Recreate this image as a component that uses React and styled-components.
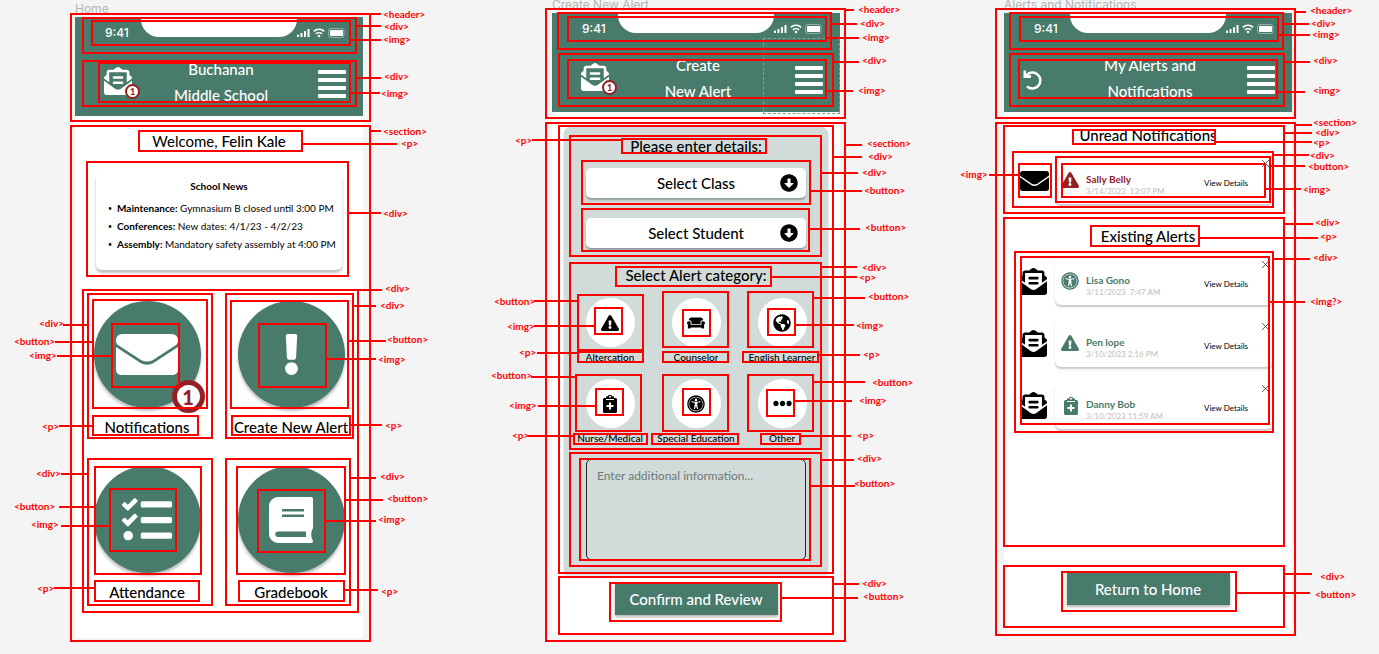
import React from "react";
import styled, { createGlobalStyle, css } from "styled-components";
import {
  FaArrowAltCircleDown,
  FaCouch,
  FaEllipsisH,
  FaEnvelopeOpenText,
  FaExclamation,
  FaExclamationTriangle,
  FaGlobeAmericas,
  FaTasks,
  FaUniversalAccess,
} from "react-icons/fa";

const color = {
  canvas: "#f4f4f4",
  green: "#497b6c",
  sage: "#d1dcda",
  maroon: "#942024",
  mark: "#ff0000",
  frameName: "#b5b5b5",
};

const GlobalStyle = createGlobalStyle`
  * { box-sizing: border-box; }
  body {
    margin: 0;
    background: ${color.canvas};
    font-family: Lato, "Open Sans", sans-serif;
    color: #000;
  }
  button, select, textarea { font-family: inherit; }
  button { cursor: pointer; }
`;

/* ---------- canvas and frames ---------- */

const Canvas = styled.main`
  display: grid;
  grid-template-columns: 477fr 452fr 436fr;
  align-items: start;
  min-height: 100vh;
  padding-left: 14px;
  overflow: hidden;
`;

const Board = styled.div`
  position: relative;
  padding: ${(p) => p.$top}px 0 0 61px;
`;

const FrameName = styled.div`
  height: 16px;
  margin-top: -16px;
  font: 400 12px/16px Inter, sans-serif;
  color: ${color.frameName};
`;

const Phone = styled.article`
  width: 288px;
  background: #fff;
`;

/* ---------- header ---------- */

const Header = styled.header`
  height: 99px;
  background: ${color.green};
  color: #fff;
`;

const StatusBar = styled.div`
  display: grid;
  grid-template-columns: 66px 156px 66px;
  height: 47px;
`;

const Clock = styled.span`
  padding-left: 30px;
  font: 500 12px/32px Inter, sans-serif;
`;

const Notch = styled.span`
  height: 20px;
  background: #fff;
  border-radius: 0 0 18px 18px;
`;

const StatusIcons = styled.svg`
  width: 48px;
  height: 10px;
  margin-top: 11px;
`;

const TitleBar = styled.div`
  display: grid;
  grid-template-columns: 60px 1fr 56px;
  height: 44px;
`;

const Title = styled.h1`
  display: flex;
  flex-direction: column;
  justify-content: flex-end;
  align-items: center;
  height: 44px;
  margin: 0;
  overflow: hidden;
  font-size: 15px;
  line-height: 26px;
  font-weight: 500;
  text-align: center;
`;

const HeaderButton = styled.button`
  position: relative;
  display: flex;
  align-items: flex-start;
  padding: ${(p) => p.$pad};
  border: 0;
  background: none;
  color: #fff;
`;

const Badge = styled.span`
  position: absolute;
  display: flex;
  align-items: center;
  justify-content: center;
  border-radius: 50%;
  border-style: solid;
  border-color: ${color.maroon};
  background: #fff;
  color: ${color.maroon};
  font-weight: 900;
  ${(p) =>
    p.$large
      ? css`right: -4px; bottom: -5px; width: 33px; height: 33px; border-width: 5px; font-size: 20px;`
      : css`left: 50px; top: 20px; width: 15px; height: 15px; border-width: 2px; font-size: 9px;`}
`;

const MenuBars = styled.span`
  display: grid;
  gap: 4px;
  i { width: 28px; height: 4px; border-radius: 1px; background: #fff; }
`;

/* ---------- shared text and buttons ---------- */

const Section = styled.section`
  display: flex;
  flex-direction: column;
  align-items: center;
  padding: ${(p) => p.$pad};
`;

const Lead = styled.p`
  margin: ${(p) => p.$top || 0}px 0 0;
  font-size: 15px;
  line-height: 20px;
  font-weight: ${(p) => (p.$light ? 400 : 500)};
  text-align: center;
  white-space: nowrap;
  strong { font-weight: 500; }
`;

const ActionButton = styled.button`
  width: 163px;
  height: 32px;
  margin-top: ${(p) => p.$top}px;
  padding: 0;
  border: 0;
  background: ${color.green};
  box-shadow: 0 2px 3px rgba(0, 0, 0, 0.3);
  color: #fff;
  font-size: 15px;
  font-weight: 500;
`;

/* ---------- home ---------- */

const NewsCard = styled.div`
  width: 246px;
  height: 98px;
  margin-top: 21px;
  padding-top: 6px;
  border-radius: 6px;
  box-shadow: 0 3px 3px rgba(0, 0, 0, 0.25);
  font-size: 10px;
  h2 { margin: 0; font-size: 10px; line-height: 16px; text-align: center; }
  ul { margin: 5px 0 0; padding: 0 0 0 21px; list-style: none; }
  li { position: relative; line-height: 18px; white-space: nowrap; }
  li::before { content: "•"; position: absolute; left: -9px; font-size: 7px; }
`;

const Tiles = styled.div`
  display: grid;
  grid-template-columns: 1fr 1fr;
  gap: 29px 0;
  width: 100%;
  margin-top: 31px;
`;

const Tile = styled.div`
  display: flex;
  flex-direction: column;
  align-items: center;
`;

const TileButton = styled.button`
  position: relative;
  display: flex;
  align-items: center;
  justify-content: center;
  width: 107px;
  height: 107px;
  padding: 0;
  border: 0;
  border-radius: 50%;
  background: ${color.green};
  box-shadow: 0 3px 3px rgba(0, 0, 0, 0.25);
  color: #fff;
`;

/* ---------- create alert ---------- */

const Panel = styled.form`
  display: flex;
  flex-direction: column;
  align-items: center;
  width: 264px;
  padding: 9px 0 13px;
  border-radius: 6px 6px 0 0;
  background: ${color.sage};
  box-shadow: 0 2px 3px rgba(0, 0, 0, 0.2);
`;

const Picker = styled.label`
  position: relative;
  display: block;
  width: 220px;
  margin-top: ${(p) => p.$top}px;
  svg { position: absolute; right: 8px; top: 6px; pointer-events: none; }
`;

const Select = styled.select`
  display: block;
  width: 100%;
  height: 30px;
  border: 0;
  border-radius: 5px;
  background: #fff;
  box-shadow: 0 2px 2px rgba(0, 0, 0, 0.3);
  appearance: none;
  color: #000;
  font-size: 15px;
  font-weight: 500;
  text-align-last: center;
`;

const Categories = styled.div`
  display: grid;
  grid-template-columns: repeat(3, 86px);
  gap: 16px 0;
  margin-top: 13px;
`;

const Category = styled.div`
  display: flex;
  flex-direction: column;
  align-items: center;
  gap: 4px;
  p { height: 12px; margin: 0; overflow: hidden; font-size: 10px; line-height: 12px; font-weight: 500; white-space: nowrap; }
`;

const RoundButton = styled.button`
  display: flex;
  align-items: center;
  justify-content: center;
  width: 49px;
  height: 49px;
  padding: 0;
  border: 0;
  border-radius: 50%;
  background: #fff;
  color: #000;
`;

const Notes = styled.textarea`
  display: block;
  width: 220px;
  height: 101px;
  margin-top: 15px;
  padding: 8px 10px;
  border: 1px solid #222;
  border-radius: 5px;
  background: transparent;
  font-size: 12px;
  line-height: 16px;
  resize: none;
  &::placeholder { color: #6f7977; opacity: 1; }
`;

/* ---------- alerts ---------- */

const AlertList = styled.ul`
  display: grid;
  gap: 15px;
  width: 100%;
  margin: ${(p) => p.$top}px 0 0;
  padding: 0 19px 0 16px;
  list-style: none;
`;

const AlertRow = styled.li`
  display: grid;
  grid-template-columns: 35px 1fr;
  align-items: center;
`;

const AlertCard = styled.div`
  position: relative;
  display: grid;
  grid-template-columns: 25px 1fr 69px;
  height: 47px;
  padding-left: 6px;
  border-radius: 6px;
  box-shadow: 0 2px 2px rgba(0, 0, 0, 0.22);
  color: ${(p) => (p.$unread ? color.maroon : color.green)};
  > svg { margin-top: 14px; }
`;

const Person = styled.div`
  display: flex;
  flex-direction: column;
  padding-top: 16px;
  white-space: pre;
  strong { font-size: 10px; line-height: 13px; font-weight: 700; }
  time { font-size: 8px; line-height: 11px; color: #bdbdbd; }
`;

const DetailsLink = styled.a`
  padding-top: 20px;
  font-size: 8px;
  line-height: 12px;
  color: #000;
  text-decoration: none;
`;

const Dismiss = styled.button`
  position: absolute;
  top: 2px;
  right: 3px;
  display: flex;
  padding: 0;
  border: 0;
  background: none;
`;

/* ---------- mark-up callouts lying over the frames ---------- */

const Layer = styled.div`
  position: absolute;
  inset: 0;
  pointer-events: none;
`;

const Outline = styled.div`
  position: absolute;
  left: ${(p) => p.$r[0]}px;
  top: ${(p) => p.$r[1]}px;
  width: ${(p) => p.$r[2]}px;
  height: ${(p) => p.$r[3]}px;
  border: ${(p) => (p.$ghost ? "1px dashed #8e9a96" : `2px solid ${color.mark}`)};
`;

const Leader = styled.div`
  position: absolute;
  left: ${(p) => p.$from}px;
  top: ${(p) => p.$y - 1}px;
  width: ${(p) => p.$to - p.$from}px;
  height: 2px;
  background: ${color.mark};
`;

const Tag = styled.span`
  position: absolute;
  left: ${(p) => p.$x}px;
  top: ${(p) => p.$y - 5}px;
  font-size: 10px;
  line-height: 10px;
  font-weight: 700;
  white-space: nowrap;
  color: ${color.mark};
`;

/* box: [x, y, w, h]; line: [from, to, y]; tag: [name, x, y] */
const homeMarks = [
  { box: [56, 13, 301, 109], line: [357, 367, 14], tag: ["header", 369, 14] },
  { box: [68, 17, 275, 37], line: [343, 367, 26], tag: ["div", 370, 26] },
  { box: [77, 20, 260, 26], line: [337, 367, 40], tag: ["img", 369, 39] },
  { box: [68, 60, 275, 47], line: [343, 367, 78], tag: ["div", 370, 76] },
  { box: [84, 62, 253, 41], line: [337, 366, 93], tag: ["img", 367, 93] },
  { box: [56, 125, 301, 517], line: [357, 367, 131], tag: ["section", 369, 131] },
  { box: [124, 130, 165, 22], line: [289, 383, 144], tag: ["p", 387, 143] },
  { box: [72, 161, 263, 116], line: [335, 367, 213], tag: ["div", 369, 213] },
  { box: [68, 289, 277, 324], line: [345, 368, 290], tag: ["div", 371, 288] },
  { box: [73, 293, 126, 146], line: [49, 73, 325], tag: ["div", 25, 323] },
  { box: [78, 299, 116, 110], line: [41, 78, 342], tag: ["button", 0, 341] },
  { box: [97, 323, 69, 65], line: [43, 97, 356], tag: ["img", 15, 355] },
  { box: [78, 415, 107, 21], line: [45, 78, 426], tag: ["p", 28, 426] },
  { box: [211, 293, 129, 146], line: [340, 362, 306], tag: ["div", 366, 305] },
  { box: [216, 300, 119, 109], line: [335, 372, 341], tag: ["button", 373, 339] },
  { box: [244, 323, 69, 65], line: [313, 362, 359], tag: ["img", 364, 359] },
  { box: [217, 415, 120, 21], line: [337, 368, 425], tag: ["p", 371, 425] },
  { box: [73, 458, 126, 148], line: [47, 73, 474], tag: ["div", 22, 473] },
  { box: [80, 466, 108, 109], line: [45, 80, 507], tag: ["button", 0, 506] },
  { box: [95, 488, 68, 64], line: [47, 95, 526], tag: ["img", 17, 524] },
  { box: [80, 580, 106, 22], line: [40, 80, 588], tag: ["p", 23, 588] },
  { box: [211, 458, 126, 148], line: [337, 362, 478], tag: ["div", 366, 476] },
  { box: [222, 466, 110, 109], line: [332, 369, 500], tag: ["button", 373, 498] },
  { box: [243, 489, 69, 64], line: [312, 362, 521], tag: ["img", 364, 519] },
  { box: [224, 580, 107, 22], line: [331, 364, 590], tag: ["p", 367, 591] },
];

const createMarks = [
  { box: [272, 38, 77, 76], ghost: true },
  { box: [54, 8, 301, 111], line: [355, 363, 10], tag: ["header", 367, 9] },
  { box: [66, 12, 275, 38], line: [341, 366, 24], tag: ["div", 369, 23] },
  { box: [76, 16, 260, 26], line: [336, 368, 38], tag: ["img", 371, 37] },
  { box: [67, 53, 276, 54], line: [343, 368, 62], tag: ["div", 371, 60] },
  { box: [76, 59, 260, 40], line: [336, 362, 91], tag: ["img", 367, 90] },
  { box: [54, 122, 301, 520], line: [355, 371, 145], tag: ["section", 376, 143] },
  { box: [67, 125, 276, 449], line: [343, 371, 157], tag: ["div", 377, 156] },
  { box: [78, 135, 253, 122], line: [331, 367, 173], tag: ["div", 371, 172] },
  { box: [130, 138, 146, 16], line: [41, 130, 140], tag: ["p", 24, 140] },
  { box: [90, 160, 230, 45], line: [320, 371, 191], tag: ["button", 373, 190] },
  { box: [90, 208, 229, 44], line: [319, 369, 229], tag: ["button", 374, 227] },
  { box: [78, 262, 253, 188], line: [331, 366, 267], tag: ["div", 371, 267] },
  { box: [124, 266, 157, 21], line: [281, 366, 277], tag: ["p", 368, 277] },
  { box: [86, 294, 67, 57], line: [43, 86, 301], tag: ["button", 3, 301] },
  { box: [103, 307, 29, 28], line: [43, 103, 326], tag: ["img", 16, 326] },
  { box: [86, 351, 67, 12], line: [46, 86, 353], tag: ["p", 28, 352] },
  { box: [171, 291, 67, 57] },
  { box: [191, 309, 29, 28] },
  { box: [171, 351, 67, 12] },
  { box: [256, 291, 67, 57], line: [323, 374, 298], tag: ["button", 377, 296] },
  { box: [276, 308, 29, 28], line: [305, 363, 325], tag: ["img", 365, 325] },
  { box: [251, 351, 77, 12], line: [328, 369, 355], tag: ["p", 372, 354] },
  { box: [84, 374, 67, 58], line: [40, 84, 377], tag: ["button", 0, 375] },
  { box: [104, 388, 29, 28], line: [47, 104, 406], tag: ["img", 18, 405] },
  { box: [82, 433, 75, 12], line: [37, 82, 436], tag: ["p", 21, 435] },
  { box: [171, 374, 67, 58] },
  { box: [191, 388, 29, 28] },
  { box: [160, 433, 88, 12] },
  { box: [256, 374, 67, 58], line: [323, 374, 382], tag: ["button", 381, 382] },
  { box: [275, 389, 29, 28], line: [304, 361, 401], tag: ["img", 368, 400] },
  { box: [269, 433, 41, 12], line: [310, 360, 436], tag: ["p", 366, 435] },
  { box: [78, 452, 253, 115], line: [331, 363, 460], tag: ["div", 366, 458] },
  { box: [88, 458, 232, 103], line: [320, 364, 486], tag: ["button", 363, 483] },
  { box: [67, 576, 276, 59], line: [343, 368, 584], tag: ["div", 371, 583] },
  { box: [118, 582, 173, 40], line: [291, 367, 598], tag: ["button", 372, 596] },
];

const alertMarks = [
  { box: [52, 8, 301, 111], line: [353, 363, 12], tag: ["header", 367, 10] },
  { box: [66, 12, 275, 38], line: [341, 366, 24], tag: ["div", 368, 23] },
  { box: [76, 16, 260, 26], line: [336, 367, 35], tag: ["img", 369, 34] },
  { box: [66, 53, 276, 54], line: [342, 367, 62], tag: ["div", 370, 60] },
  { box: [75, 59, 260, 40], line: [335, 362, 92], tag: ["img", 370, 90] },
  { box: [52, 122, 301, 514], line: [353, 369, 125], tag: ["section", 370, 122] },
  { box: [60, 125, 282, 89], line: [342, 369, 133], tag: ["div", 372, 132] },
  { box: [129, 129, 144, 16], line: [273, 369, 142], tag: ["p", 370, 142] },
  { box: [69, 151, 262, 57], line: [331, 366, 155], tag: ["div", 367, 155] },
  { box: [75, 163, 34, 35], line: [46, 75, 175], tag: ["img", 17, 174] },
  { box: [112, 156, 216, 47], line: [328, 362, 166], tag: ["button", 365, 166] },
  { box: [118, 163, 205, 35], line: [323, 358, 189], tag: ["img", 360, 189] },
  { box: [60, 217, 282, 330], line: [342, 370, 224], tag: ["div", 372, 222] },
  { box: [147, 225, 110, 22], line: [257, 375, 238], tag: ["p", 377, 236] },
  { box: [71, 251, 260, 182], line: [331, 367, 259], tag: ["div", 370, 257] },
  { box: [77, 256, 250, 169], line: [327, 362, 302], tag: ["img?", 367, 301] },
  { box: [60, 565, 282, 63], line: [342, 369, 574], tag: ["div", 377, 576] },
  { box: [118, 571, 176, 41], line: [294, 367, 593], tag: ["button", 372, 594] },
];

function Callouts({ marks }) {
  return (
    <Layer>
      {marks.map((m, i) => (
        <React.Fragment key={i}>
          <Outline $r={m.box} $ghost={m.ghost} />
          {m.line && <Leader $from={m.line[0]} $to={m.line[1]} $y={m.line[2]} />}
          {m.tag && (
            <Tag $x={m.tag[1]} $y={m.tag[2]}>{`<${m.tag[0]}>`}</Tag>
          )}
        </React.Fragment>
      ))}
    </Layer>
  );
}

/* ---------- drawings ---------- */

const Envelope = ({ width, height }) => (
  <svg width={width} height={height} viewBox="0 0 62 41" preserveAspectRatio="none" fill="currentColor" aria-hidden="true">
    <path d="M6 0h50a6 6 0 0 1 6 6v1c0 2-1 3-2 4L37 26c-4 2-8 2-12 0L2 11C1 10 0 9 0 7V6a6 6 0 0 1 6-6z" />
    <path d="M0 13l23 15c5 3.500 11 3.500 16 0l23-15v23a5 5 0 0 1-5 5H5a5 5 0 0 1-5-5z" />
  </svg>
);

const Book = () => (
  <svg width="44" height="46" viewBox="0 0 44 46" aria-hidden="true">
    <path
      fill="currentColor"
      fillRule="evenodd"
      d="M9 0h33a2 2 0 0 1 2 2v29a3 3 0 0 1-1 2c-1 3-1 6 0 9a3 3 0 0 1 1 2 2 2 0 0 1-2 2H9a9 9 0 0 1-9-9V9a9 9 0 0 1 9-9zM13 12v2.500h22V12zM13 17.500V20h22v-2.500zM9 34.500a2.700 2.700 0 0 0 0 5.500h28v-5.500z"
    />
  </svg>
);

const Clipboard = ({ size }) => (
  <svg width={size} height={size} viewBox="0 0 20 20" aria-hidden="true">
    <path
      fill="currentColor"
      fillRule="evenodd"
      d="M6 2.500h1.500a2.700 2.700 0 0 1 5 0H14V4h1.500A1.500 1.500 0 0 1 17 5.500v12a1.500 1.500 0 0 1-1.500 1.500h-11A1.500 1.500 0 0 1 3 17.500v-12A1.500 1.500 0 0 1 4.500 4H6zM10 1.800a1 1 0 1 0 0 2 1 1 0 0 0 0-2zM6 5v1h8V5zM9 8.500V11H6.500v2H9v2.500h2V13h2.500v-2H11V8.500z"
    />
  </svg>
);

const Undo = () => (
  <svg width="20" height="20" viewBox="0 0 20 20" fill="none" aria-hidden="true">
    <path d="M4 5.500a8 8 0 1 1 0.500 11.500" stroke="currentColor" strokeWidth="2.500" transform="translate(-0.500 -0.500)" />
    <path d="M0.500 0.500h2.500v3.500l5 1v3H0.500z" fill="currentColor" />
  </svg>
);

const Status = () => (
  <StatusIcons viewBox="0 0 48 10" aria-hidden="true">
    <g fill="#fff">
      <rect x="0" y="6.500" width="2" height="2.500" rx=".6" />
      <rect x="3.500" y="5" width="2" height="4" rx=".6" />
      <rect x="7" y="3" width="2" height="6" rx=".6" />
      <rect x="10.500" y="1" width="2" height="8" rx=".6" />
      <rect x="33" y="2" width="13" height="6" rx="1" />
      <circle cx="22" cy="8" r="1.300" />
    </g>
    <g fill="none" stroke="#fff" strokeWidth="1.500">
      <path d="M16.800 3.400a7.600 7.600 0 0 1 10.400 0M18.900 5.900a4.500 4.500 0 0 1 6.200 0" />
      <rect x="31.500" y=".5" width="15.500" height="9" rx="2.500" strokeWidth="1" opacity=".4" />
    </g>
  </StatusIcons>
);

const Cross = () => (
  <svg width="9" height="9" viewBox="0 0 9 9" stroke="#333" strokeWidth=".8" aria-hidden="true">
    <path d="M1 1l7 7M8 1L1 8" />
  </svg>
);

/* ---------- composed parts ---------- */

function PhoneHeader({ lines, back }) {
  return (
    <Header>
      <StatusBar>
        <Clock>9:41</Clock>
        <Notch />
        <Status />
      </StatusBar>
      <TitleBar>
        {back ? (
          <HeaderButton $pad="10px 0 0 19px" aria-label="Back">
            <Undo />
          </HeaderButton>
        ) : (
          <HeaderButton $pad="3px 0 0 29px" aria-label="Inbox">
            <FaEnvelopeOpenText size={28} />
            <Badge>1</Badge>
          </HeaderButton>
        )}
        <Title>
          {lines.map((line) => (
            <span key={line}>{line}</span>
          ))}
        </Title>
        <HeaderButton $pad="6px 0 0 11px" aria-label="Menu">
          <MenuBars>
            <i />
            <i />
            <i />
            <i />
          </MenuBars>
        </HeaderButton>
      </TitleBar>
    </Header>
  );
}

const tiles = [
  { name: "Notifications", icon: <Envelope width={62} height={41} />, badge: 1 },
  { name: "Create New Alert", icon: <FaExclamation size={41} /> },
  { name: "Attendance", icon: <FaTasks size={50} /> },
  { name: "Gradebook", icon: <Book /> },
];

const categories = [
  ["Altercation", <FaExclamationTriangle size={18} />],
  ["Counselor", <FaCouch size={18} />],
  ["English Learner", <FaGlobeAmericas size={18} />],
  ["Nurse/Medical", <Clipboard size={20} />],
  ["Special Education", <FaUniversalAccess size={18} />],
  ["Other", <FaEllipsisH size={19} />],
];

const existing = [
  ["Lisa Gono", "3/11/2023  7:47 AM", <FaUniversalAccess size={18} />],
  ["Pen lope", "3/10/2023 2:16 PM", <FaExclamationTriangle size={18} />],
  ["Danny Bob", "3/10/2023 11:59 AM", <Clipboard size={20} />],
];

function Alert({ unread, name, when, icon }) {
  return (
    <AlertRow>
      {unread ? <Envelope width={29} height={20} /> : <FaEnvelopeOpenText size={27} />}
      <AlertCard $unread={unread}>
        {icon}
        <Person>
          <strong>{name}</strong>
          <time>{when}</time>
        </Person>
        <DetailsLink href="#details">View Details</DetailsLink>
        <Dismiss aria-label="Dismiss">
          <Cross />
        </Dismiss>
      </AlertCard>
    </AlertRow>
  );
}

function Home() {
  return (
    <Board $top={17}>
      <FrameName>Home</FrameName>
      <Phone>
        <PhoneHeader lines={["Buchanan", "Middle School"]} />
        <Section $pad="15px 0 36px">
          <Lead $light>
            Welcome, <strong>Felin Kale</strong>
          </Lead>
          <NewsCard>
            <h2>School News</h2>
            <ul>
              <li><b>Maintenance:</b> Gymnasium B closed until 3:00 PM</li>
              <li><b>Conferences:</b> New dates: 4/1/23 - 4/2/23</li>
              <li><b>Assembly:</b> Mandatory safety assembly at 4:00 PM</li>
            </ul>
          </NewsCard>
          <Tiles>
            {tiles.map((t) => (
              <Tile key={t.name}>
                <TileButton aria-label={t.name}>
                  {t.icon}
                  {t.badge && <Badge $large>{t.badge}</Badge>}
                </TileButton>
                <Lead $top={9}>{t.name}</Lead>
              </Tile>
            ))}
          </Tiles>
        </Section>
      </Phone>
      <Callouts marks={homeMarks} />
    </Board>
  );
}

function CreateAlert() {
  return (
    <Board $top={13}>
      <FrameName>Create New Alert</FrameName>
      <Phone>
        <PhoneHeader lines={["Create", "New Alert"]} />
        <Section $pad="15px 0 20px">
          <Panel>
            <Lead>Please enter details:</Lead>
            <Picker $top={12}>
              <Select aria-label="Class">
                <option>Select Class</option>
              </Select>
              <FaArrowAltCircleDown size={18} />
            </Picker>
            <Picker $top={20}>
              <Select aria-label="Student">
                <option>Select Student</option>
              </Select>
              <FaArrowAltCircleDown size={18} />
            </Picker>
            <Lead $top={17}>Select Alert category:</Lead>
            <Categories>
              {categories.map(([name, icon]) => (
                <Category key={name}>
                  <RoundButton type="button" aria-label={name}>{icon}</RoundButton>
                  <p>{name}</p>
                </Category>
              ))}
            </Categories>
            <Notes aria-label="Additional information" placeholder="Enter additional information..." />
          </Panel>
          <ActionButton $top={10}>Confirm and Review</ActionButton>
        </Section>
      </Phone>
      <Callouts marks={createMarks} />
    </Board>
  );
}

function Alerts() {
  return (
    <Board $top={13}>
      <FrameName>Alerts and Notifications</FrameName>
      <Phone>
        <PhoneHeader back lines={["My Alerts and", "Notifications"]} />
        <Section $pad="13px 0 28px">
          <Lead>Unread Notifications</Lead>
          <AlertList $top={12}>
            <Alert unread name="Sally Belly" when="3/14/2023  12:07 PM" icon={<FaExclamationTriangle size={18} />} />
          </AlertList>
          <Lead $top={22}>Existing Alerts</Lead>
          <AlertList $top={12}>
            {existing.map(([name, when, icon]) => (
              <Alert key={name} name={name} when={when} icon={icon} />
            ))}
          </AlertList>
          <ActionButton $top={144}>Return to Home</ActionButton>
        </Section>
      </Phone>
      <Callouts marks={alertMarks} />
    </Board>
  );
}

export default function App() {
  return (
    <>
      <GlobalStyle />
      <Canvas>
        <Home />
        <CreateAlert />
        <Alerts />
      </Canvas>
    </>
  );
}
